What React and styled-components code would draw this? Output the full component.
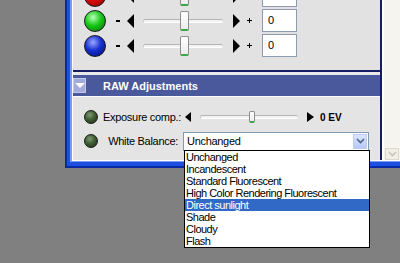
import styled, { createGlobalStyle } from 'styled-components';

const GlobalStyle = createGlobalStyle`
  html, body {
    margin: 0;
    padding: 0;
    background: #808080;
    overflow: hidden;
  }
  body {
    font-family: "Liberation Sans", Arial, sans-serif;
    font-size: 11px;
    color: #000;
  }
`;

const Stage = styled.div`
  width: 400px;
  height: 263px;
  overflow: hidden;
  padding-left: 65px;
  box-sizing: border-box;
`;

const Window = styled.div`
  margin-top: -17px;
  width: 345px;
  background: #1d4fe0;
  border-left: 2px solid #0a27a4;
  border-bottom: 2px solid #0a27a4;
  padding: 0 0 4px 3px;
`;

const FrameEdge = styled.div`
  border-left: 2px solid #7b9cf2;
  border-bottom: 1px solid #7b9cf2;
`;

const Client = styled.div`
  display: flex;
  border-left: 1px solid #fff;
  border-bottom: 1px solid #fff;
  background: #e9e9e9;
`;

const MainColumn = styled.div`
  flex: 0 0 307px;
  border-right: 2px solid #161c63;
  display: flex;
  flex-direction: column;
`;

const ColorPanel = styled.div`
  background: #e2e2e2;
  border-bottom: 2px solid #161c63;
  padding-bottom: 12px;
`;

const ColorRow = styled.div`
  display: flex;
  align-items: center;
  height: 25px;
  padding-left: 11px;
`;

const Ball = styled.span`
  flex: 0 0 auto;
  width: ${(p) => p.$size}px;
  height: ${(p) => p.$size}px;
  border-radius: 50%;
  box-sizing: border-box;
  border: 1px solid #1a1a1a;
  background: ${(p) => `radial-gradient(circle at 40% 32%, ${p.$light} 0%, ${p.$mid} 45%, ${p.$dark} 100%)`};
`;

const Dash = styled.span`
  width: 4px;
  height: 2px;
  background: #000;
  margin-left: 10px;
`;

const Plus = styled.span`
  position: relative;
  width: 5px;
  height: 5px;
  margin-left: 7px;
  &::before,
  &::after {
    content: '';
    position: absolute;
    background: #000;
  }
  &::before {
    left: 0;
    top: 2px;
    width: 5px;
    height: 1px;
  }
  &::after {
    left: 2px;
    top: 0;
    width: 1px;
    height: 5px;
  }
`;

const Arrow = styled.span`
  flex: 0 0 auto;
  width: 0;
  height: 0;
  margin-left: ${(p) => p.$gap}px;
  border-top: ${(p) => p.$h / 2}px solid transparent;
  border-bottom: ${(p) => p.$h / 2}px solid transparent;
  ${(p) =>
    p.$dir === 'left'
      ? `border-right: ${p.$w}px solid #000;`
      : `border-left: ${p.$w}px solid #000;`}
`;

const Track = styled.div`
  position: relative;
  flex: 0 0 auto;
  width: ${(p) => p.$width}px;
  height: 4px;
  margin-left: ${(p) => p.$gap}px;
  box-sizing: border-box;
  border-radius: 2px;
  border-top: 1px solid #b4b4b4;
  border-left: 1px solid #c4c4c4;
  border-bottom: 1px solid #fff;
  background: #f3f3f3;
`;

const Thumb = styled.span`
  position: absolute;
  left: ${(p) => p.$left}px;
  top: 50%;
  width: ${(p) => p.$w}px;
  height: ${(p) => p.$h}px;
  transform: translateY(-50%);
  box-sizing: border-box;
  border: 1px solid #8d8d8d;
  border-bottom: 2px solid #3fa54a;
  border-radius: 2px;
  background: linear-gradient(#ffffff, #ececec);
`;

const ValueBox = styled.div`
  width: 35px;
  height: 23px;
  margin-left: 10px;
  box-sizing: border-box;
  border: 1px solid #8b9cb2;
  background: #fff;
  padding: 4px 0 0 5px;
  font-size: 11px;
`;

const Header = styled.div`
  display: flex;
  align-items: center;
  height: 21px;
  margin-top: 3px;
  background: #4a599b;
`;

const Collapse = styled.span`
  display: flex;
  align-items: center;
  justify-content: center;
  width: 13px;
  height: 15px;
  box-sizing: border-box;
  background: #a3acd8;
  border: 1px solid #c3c9ea;
  &::after {
    content: '';
    border-left: 5px solid transparent;
    border-right: 5px solid transparent;
    border-top: 5px solid #fff;
  }
`;

const Title = styled.span`
  margin-left: 17px;
  color: #fff;
  font-weight: bold;
  font-size: 11px;
`;

const RawPanel = styled.div`
  background: #e4e4e4;
  border-top: 1px solid #fbfbfb;
  padding: 9px 0 8px;
  display: flex;
  flex-direction: column;
  gap: 2px;
`;

const RawRow = styled.div`
  display: flex;
  align-items: center;
  height: 22px;
  padding-left: 11px;
`;

const Label = styled.span`
  width: 75px;
  margin-left: 5px;
  text-align: right;
  white-space: nowrap;
  font-size: 11px;
  letter-spacing: -0.3px;
`;

const EvText = styled.span`
  margin-left: 6px;
  font-weight: bold;
  font-size: 10px;
`;

const SelectWrap = styled.div`
  position: relative;
  margin-left: 5px;
  width: 186px;
  height: 19px;
`;

const SelectBox = styled.div`
  display: flex;
  align-items: center;
  justify-content: space-between;
  height: 100%;
  box-sizing: border-box;
  border: 1px solid #7f9db9;
  background: #fff;
  padding: 0 1px 0 3px;
  font-size: 11px;
  letter-spacing: -0.3px;
`;

const SelectButton = styled.span`
  display: flex;
  align-items: center;
  justify-content: center;
  width: 14px;
  height: 15px;
  box-sizing: border-box;
  border: 1px solid #bccbf0;
  background: linear-gradient(#dbe5fc, #b6c8f6);
`;

const List = styled.ul`
  position: absolute;
  left: 1px;
  top: 18px;
  width: 186px;
  margin: 0;
  padding: 0;
  list-style: none;
  box-sizing: border-box;
  border: 1px solid #000;
  background: #fff;
  z-index: 2;
`;

const Item = styled.li`
  height: 12px;
  line-height: 12px;
  padding-left: 1px;
  font-size: 11px;
  letter-spacing: -0.5px;
  white-space: nowrap;
  background: ${(p) => (p.$active ? '#3169c6' : 'transparent')};
  color: ${(p) => (p.$active ? '#fff' : '#000')};
`;

const Strip = styled.div`
  flex: 1;
  display: flex;
  flex-direction: column;
  justify-content: flex-end;
  background: #f6f4ee;
  border-left: 2px solid #fff;
  padding: 0 0 0 1px;
`;

const ScrollArrow = styled.span`
  display: flex;
  align-items: center;
  justify-content: center;
  width: 12px;
  height: 10px;
  border: 1px solid #dcd8cc;
  background: #f1efe8;
`;

const colorRows = [
  { light: '#ff9a9a', mid: '#dd0a0a', dark: '#7a0000', value: '' },
  { light: '#b8ffb8', mid: '#18c818', dark: '#056b05', value: '0' },
  { light: '#9aa8ff', mid: '#1530d0', dark: '#000c6e', value: '0' },
];

const balances = [
  'Unchanged',
  'Incandescent',
  'Standard Fluorescent',
  'High Color Rendering Fluorescent',
  'Direct sunlight',
  'Shade',
  'Cloudy',
  'Flash',
];

function Chevron({ color }) {
  return (
    <svg width="9" height="6" viewBox="0 0 9 6">
      <path d="M1 1 L4.5 4.5 L8 1" fill="none" stroke={color} strokeWidth="1.6" />
    </svg>
  );
}

export default function App() {
  return (
    <Stage>
      <GlobalStyle />
      <Window>
        <FrameEdge>
          <Client>
            <MainColumn>
              <ColorPanel>
                {colorRows.map((c, i) => (
                  <ColorRow key={i}>
                    <Ball $size={22} $light={c.light} $mid={c.mid} $dark={c.dark} />
                    <Dash />
                    <Arrow $dir="left" $w={7} $h={14} $gap={7} />
                    <Track $width={80} $gap={9}>
                      <Thumb $left={36} $w={9} $h={20} />
                    </Track>
                    <Arrow $dir="right" $w={7} $h={14} $gap={10} />
                    <Plus />
                    <ValueBox>{c.value}</ValueBox>
                  </ColorRow>
                ))}
              </ColorPanel>

              <Header>
                <Collapse />
                <Title>RAW Adjustments</Title>
              </Header>

              <RawPanel>
                <RawRow>
                  <Ball $size={14} $light="#7d9a70" $mid="#3f5c33" $dark="#1d2e16" />
                  <Label>Exposure comp.:</Label>
                  <Arrow $dir="left" $w={6} $h={11} $gap={7} />
                  <Track $width={98} $gap={9}>
                    <Thumb $left={48} $w={6} $h={12} />
                  </Track>
                  <Arrow $dir="right" $w={7} $h={11} $gap={9} />
                  <EvText>0 EV</EvText>
                </RawRow>
                <RawRow>
                  <Ball $size={14} $light="#7d9a70" $mid="#3f5c33" $dark="#1d2e16" />
                  <Label>White Balance:</Label>
                  <SelectWrap>
                    <SelectBox>
                      <span>Unchanged</span>
                      <SelectButton>
                        <Chevron color="#4d6185" />
                      </SelectButton>
                    </SelectBox>
                    <List>
                      {balances.map((b) => (
                        <Item key={b} $active={b === 'Direct sunlight'}>
                          {b}
                        </Item>
                      ))}
                    </List>
                  </SelectWrap>
                </RawRow>
              </RawPanel>
            </MainColumn>
            <Strip>
              <ScrollArrow>
                <Chevron color="#c9c5b8" />
              </ScrollArrow>
            </Strip>
          </Client>
        </FrameEdge>
      </Window>
    </Stage>
  );
}
